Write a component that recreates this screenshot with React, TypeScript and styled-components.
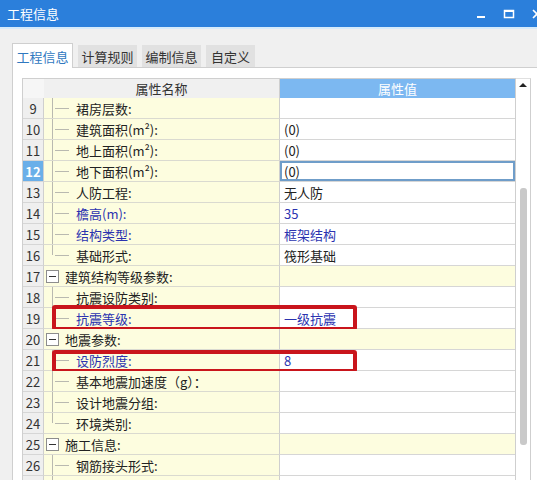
import React from "react";
import styled, { createGlobalStyle, css } from "styled-components";

const GlobalStyle = createGlobalStyle`
  html, body {
    margin: 0;
    padding: 0;
    background: #f0f0f0;
  }
  body {
    font-family: "Noto Sans CJK SC", "Noto Sans", "Liberation Sans", sans-serif;
    font-size: 13px;
    color: #222;
  }
`;

const Window = styled.div`
  width: 537px;
  height: 480px;
  overflow: hidden;
  background: #f0f0f0;
  display: flex;
  flex-direction: column;
`;

const TitleBar = styled.div`
  height: 27px;
  flex: none;
  background: #2b7fdb;
  border-bottom: 2px solid #d6ebfb;
  display: flex;
  align-items: center;
  justify-content: space-between;
  padding-left: 7px;
  color: #fff;
  font-size: 13px;
`;

const Controls = styled.div`
  display: flex;
  align-items: center;
  gap: 16px;
  margin-right: -6px;
`;

const Body = styled.div`
  flex: 1;
  padding: 14px 0 0 12px;
  display: flex;
  flex-direction: column;
`;

const Tabs = styled.div`
  display: flex;
  align-items: flex-end;
  gap: 5px;
  height: 24px;
  position: relative;
  z-index: 1;
`;

const Tab = styled.div<{ active?: boolean; w: number }>`
  width: ${({ w }) => w}px;
  box-sizing: border-box;
  display: flex;
  align-items: center;
  justify-content: center;
  font-size: 13px;
  ${({ active }) =>
    active
      ? css`
          height: 25px;
          margin-bottom: -1px;
          background: #fff;
          border: 1px solid #cfcfcf;
          border-bottom: none;
          color: #2f78bf;
        `
      : css`
          height: 22px;
          background: #e1e1e1;
          color: #333;
        `}
`;

const Panel = styled.div`
  flex: 1;
  width: 540px;
  background: #fff;
  border-top: 1px solid #cfcfcf;
  border-left: 1px solid #cfcfcf;
  padding: 10px 0 0 9px;
  display: flex;
  align-items: flex-start;
`;

const Grid = styled.div`
  width: 492px;
  border-top: 1px solid #cfcfcf;
  border-left: 1px solid #cfcfcf;
  border-right: 1px solid #cfcfcf;
`;

const Row = styled.div<{ h?: number }>`
  display: grid;
  grid-template-columns: 21px 236px 235px;
  height: ${({ h }) => h ?? 21}px;
  position: relative;
`;

const NumCell = styled.div<{ selected?: boolean }>`
  background: ${({ selected }) => (selected ? "#6aafe9" : "#efefef")};
  color: ${({ selected }) => (selected ? "#fff" : "#333")};
  font-weight: ${({ selected }) => (selected ? 700 : 400)};
  border-bottom: 1px solid #d6d6d6;
  border-right: 1px solid #cfcfcf;
  display: flex;
  align-items: center;
  justify-content: center;
  font-size: 13px;
  box-sizing: border-box;
`;

const NameCell = styled.div<{ blue?: boolean }>`
  background: #fdfddf;
  border-bottom: 1px solid #dadad0;
  border-right: 1px solid #cfcfcf;
  display: flex;
  align-items: stretch;
  box-sizing: border-box;
  color: ${({ blue }) => (blue ? "#2b33b0" : "#222")};
  white-space: nowrap;
`;

const ValueCell = styled.div<{ group?: boolean; blue?: boolean; selected?: boolean }>`
  background: ${({ group }) => (group ? "#fdfddf" : "#fff")};
  border-bottom: 1px solid #d6d6d6;
  display: flex;
  align-items: center;
  padding-left: 4px;
  box-sizing: border-box;
  color: ${({ blue }) => (blue ? "#2b33b0" : "#222")};
  ${({ selected }) =>
    selected &&
    css`
      box-shadow: inset 0 0 0 2px #6f9dc9;
    `}
`;

const HeaderNum = styled.div`
  background: #f6f6f6;
  border-bottom: 1px solid #cfcfcf;
`;

const HeaderName = styled.div`
  background: #f0f0f0;
  border-bottom: 1px solid #cfcfcf;
  border-right: 1px solid #cfcfcf;
  display: flex;
  align-items: center;
  justify-content: center;
  color: #333;
`;

const HeaderValue = styled.div`
  background: #7cb8f1;
  border-bottom: 1px solid #cfcfcf;
  display: flex;
  align-items: center;
  justify-content: center;
  color: #fff;
`;

const Guide = styled.div<{ last?: boolean }>`
  width: 24px;
  margin-left: 8px;
  position: relative;
  flex: none;
  &::before {
    content: "";
    position: absolute;
    left: 0;
    top: 0;
    height: ${({ last }) => (last ? "50%" : "100%")};
    border-left: 1px solid #b9b9b0;
  }
  &::after {
    content: "";
    position: absolute;
    left: 3px;
    width: 14px;
    top: 50%;
    border-top: 1px solid #b9b9b0;
  }
`;

const Toggle = styled.div`
  width: 11px;
  height: 11px;
  border: 1px solid #8d8d8d;
  background: #fff;
  margin: 0 6px 0 2px;
  align-self: center;
  position: relative;
  flex: none;
  &::after {
    content: "";
    position: absolute;
    left: 2px;
    right: 2px;
    top: 5px;
    border-top: 1px solid #333;
  }
`;

const Label = styled.span`
  align-self: center;
`;

const Highlight = styled.div<{ h: number; t: number }>`
  position: absolute;
  left: 29px;
  top: ${({ t }) => t}px;
  width: 305px;
  height: ${({ h }) => h}px;
  box-sizing: border-box;
  border: 4px solid #c9151c;
  border-radius: 3px;
  pointer-events: none;
`;

const Scrollbar = styled.div`
  width: 14px;
  align-self: stretch;
  border-top: 1px solid #e0e0e0;
  border-right: 1px solid #cfcfcf;
  position: relative;
  background: #fff;
`;

const Thumb = styled.div`
  position: absolute;
  left: 4px;
  width: 7px;
  top: 109px;
  height: 257px;
  background: #c9c9c9;
  border-radius: 3px;
`;

const ArrowUp = styled.div`
  position: absolute;
  left: 3px;
  top: 4px;
  width: 0;
  height: 0;
  border-left: 4px solid transparent;
  border-right: 4px solid transparent;
  border-bottom: 4px solid #222;
`;

type Item = {
  n: number;
  name: string;
  value?: string;
  kind?: "group" | "child";
  last?: boolean;
  blue?: boolean;
  selected?: boolean;
  hidden?: boolean;
  mark?: { t: number; h: number };
};

const rows: Item[] = [
  { n: 9, name: "裙房层数:" },
  { n: 10, name: "建筑面积(m²):", value: "(0)" },
  { n: 11, name: "地上面积(m²):", value: "(0)" },
  { n: 12, name: "地下面积(m²):", value: "(0)", selected: true },
  { n: 13, name: "人防工程:", value: "无人防" },
  { n: 14, name: "檐高(m):", value: "35", blue: true },
  { n: 15, name: "结构类型:", value: "框架结构", blue: true },
  { n: 16, name: "基础形式:", value: "筏形基础", last: true },
  { n: 17, name: "建筑结构等级参数:", kind: "group" },
  { n: 18, name: "抗震设防类别:" },
  { n: 19, name: "抗震等级:", value: "一级抗震", blue: true, last: true, mark: { t: -3, h: 26 } },
  { n: 20, name: "地震参数:", kind: "group" },
  { n: 21, name: "设防烈度:", value: "8", blue: true, mark: { t: 0, h: 23 } },
  { n: 22, name: "基本地震加速度（g）：" },
  { n: 23, name: "设计地震分组:" },
  { n: 24, name: "环境类别:", last: true },
  { n: 25, name: "施工信息:", kind: "group" },
  { n: 26, name: "钢筋接头形式:" },
  { n: 27, name: "", hidden: true },
];

const Minimize = () => (
  <svg width="12" height="12" viewBox="0 0 12 12">
    <rect x="2" y="8" width="8" height="2" fill="#fff" />
  </svg>
);

const Maximize = () => (
  <svg width="12" height="12" viewBox="0 0 12 12">
    <rect x="1.5" y="2.5" width="9" height="7" fill="none" stroke="#fff" strokeWidth="1.5" />
    <rect x="1.5" y="2" width="9" height="2" fill="#fff" />
  </svg>
);

const Close = () => (
  <svg width="12" height="12" viewBox="0 0 12 12">
    <path d="M2 2 L10 10 M10 2 L2 10" stroke="#fff" strokeWidth="1.6" />
  </svg>
);

export default function App() {
  return (
    <Window>
      <GlobalStyle />
      <TitleBar>
        <span>工程信息</span>
        <Controls>
          <Minimize />
          <Maximize />
          <Close />
        </Controls>
      </TitleBar>
      <Body>
        <Tabs>
          <Tab active w={61}>工程信息</Tab>
          <Tab w={59}>计算规则</Tab>
          <Tab w={59}>编制信息</Tab>
          <Tab w={49}>自定义</Tab>
        </Tabs>
        <Panel>
          <Grid>
            <Row h={19}>
              <HeaderNum />
              <HeaderName>属性名称</HeaderName>
              <HeaderValue>属性值</HeaderValue>
            </Row>
            {rows.map((r) => (
              <Row key={r.n}>
                <NumCell selected={r.selected}>{r.hidden ? null : r.n}</NumCell>
                <NameCell blue={r.blue}>
                  {r.kind === "group" ? <Toggle /> : <Guide last={r.last} />}
                  <Label>{r.name}</Label>
                </NameCell>
                <ValueCell group={r.kind === "group"} blue={r.blue} selected={r.selected}>
                  {r.value}
                </ValueCell>
                {r.mark && <Highlight t={r.mark.t} h={r.mark.h} />}
              </Row>
            ))}
          </Grid>
          <Scrollbar>
            <ArrowUp />
            <Thumb />
          </Scrollbar>
        </Panel>
      </Body>
    </Window>
  );
}
